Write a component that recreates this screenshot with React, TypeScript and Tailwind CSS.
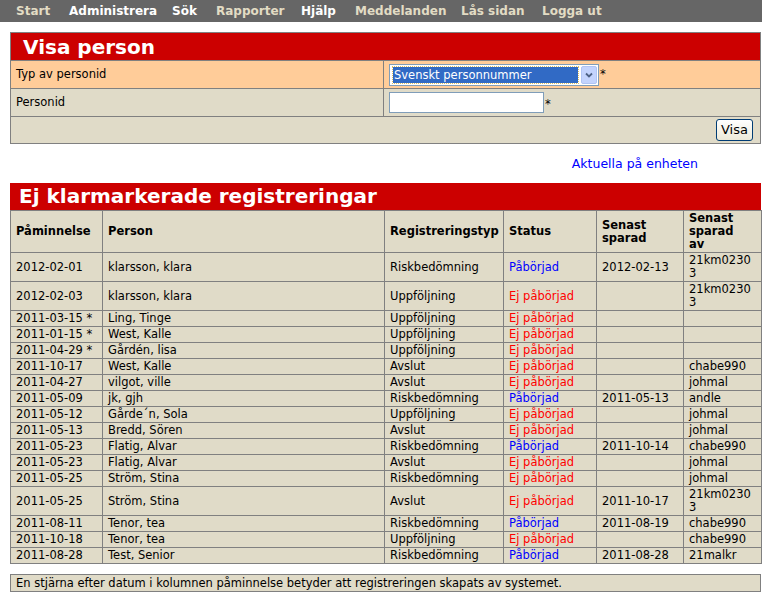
import React from "react";

const nav: { t: string; w: string; c: string }[] = [
  { t: "Start", w: "w-[53px]", c: "text-[#e2dcc4]" },
  { t: "Administrera", w: "w-[103px]", c: "text-white" },
  { t: "Sök", w: "w-[44px]", c: "text-white" },
  { t: "Rapporter", w: "w-[85px]", c: "text-[#e2dcc4]" },
  { t: "Hjälp", w: "w-[54px]", c: "text-white" },
  { t: "Meddelanden", w: "w-[106px]", c: "text-[#e2dcc4]" },
  { t: "Lås sidan", w: "w-[81px]", c: "text-[#e2dcc4]" },
  { t: "Logga ut", w: "w-[90px]", c: "text-[#e2dcc4]" },
];

type Row = { d: string; p: string; r: string; s: "P" | "E"; sp: string; av: string };

const rows: Row[] = [
  { d: "2012-02-01", p: "klarsson, klara", r: "Riskbedömning", s: "P", sp: "2012-02-13", av: "21km02303" },
  { d: "2012-02-03", p: "klarsson, klara", r: "Uppföljning", s: "E", sp: "", av: "21km02303" },
  { d: "2011-03-15 *", p: "Ling, Tinge", r: "Uppföljning", s: "E", sp: "", av: "" },
  { d: "2011-01-15 *", p: "West, Kalle", r: "Uppföljning", s: "E", sp: "", av: "" },
  { d: "2011-04-29 *", p: "Gårdén, lisa", r: "Uppföljning", s: "E", sp: "", av: "" },
  { d: "2011-10-17", p: "West, Kalle", r: "Avslut", s: "E", sp: "", av: "chabe990" },
  { d: "2011-04-27", p: "vilgot, ville", r: "Avslut", s: "E", sp: "", av: "johmal" },
  { d: "2011-05-09", p: "jk, gjh", r: "Riskbedömning", s: "P", sp: "2011-05-13", av: "andle" },
  { d: "2011-05-12", p: "Gårde´n, Sola", r: "Uppföljning", s: "E", sp: "", av: "johmal" },
  { d: "2011-05-13", p: "Bredd, Sören", r: "Avslut", s: "E", sp: "", av: "johmal" },
  { d: "2011-05-23", p: "Flatig, Alvar", r: "Riskbedömning", s: "P", sp: "2011-10-14", av: "chabe990" },
  { d: "2011-05-23", p: "Flatig, Alvar", r: "Avslut", s: "E", sp: "", av: "johmal" },
  { d: "2011-05-25", p: "Ström, Stina", r: "Riskbedömning", s: "E", sp: "", av: "johmal" },
  { d: "2011-05-25", p: "Ström, Stina", r: "Avslut", s: "E", sp: "2011-10-17", av: "21km02303" },
  { d: "2011-08-11", p: "Tenor, tea", r: "Riskbedömning", s: "P", sp: "2011-08-19", av: "chabe990" },
  { d: "2011-10-18", p: "Tenor, tea", r: "Uppföljning", s: "E", sp: "", av: "chabe990" },
  { d: "2011-08-28", p: "Test, Senior", r: "Riskbedömning", s: "P", sp: "2011-08-28", av: "21malkr" },
];

const cell = "border border-[#808080] pl-[5px] pr-[4px] py-[1px] align-middle";

export default function App() {
  return (
    <div className="min-h-[613px] bg-white text-black text-[11.5px] leading-[13px] font-['DejaVu_Sans',sans-serif]">
      <div className="h-[22px] bg-[#666666] flex items-center pl-[16px]">
        {nav.map((n) => (
          <span key={n.t} className={`${n.w} ${n.c} shrink-0 font-bold text-[12px] leading-[22px] whitespace-nowrap`}>
            {n.t}
          </span>
        ))}
      </div>

      <div className="ml-[10px] w-[751px] mt-[10px]">
        {/* Visa person */}
        <div className="border border-[#808080] bg-[#e0dbc8]">
          <div className="h-[28px] bg-[#cc0000] border-b border-[#808080] pl-[12px] pt-[1px] text-white font-bold text-[20px] leading-[27px]">
            Visa person
          </div>
          <div className="flex h-[28px] bg-[#ffcc99] border-b border-[#808080]">
            <div className="w-[373px] border-r border-[#808080] pl-[5px] flex items-center">Typ av personid</div>
            <div className="flex items-center pl-[5px]">
              <div className="w-[210px] h-[22px] border border-[#7f9db9] bg-white flex p-[1px]">
                <div className="w-[186px] ml-[2px] my-[1px] bg-[#316ac5] outline outline-1 outline-dotted outline-[#e0c060] text-white text-[11.5px] leading-[17px] pl-[1px] whitespace-nowrap">
                  Svenskt personnummer
                </div>
                <div className="ml-[3px] w-[16px] h-[18px] bg-[#c3d3fd] border border-[#b0c4f4] rounded-[2px] flex items-center justify-center">
                  <svg width="8" height="6" viewBox="0 0 8 6">
                    <path d="M1 1.5 L4 4.5 L7 1.5" fill="none" stroke="#4d6185" strokeWidth="1.8" />
                  </svg>
                </div>
              </div>
              <span className="ml-[1px]">*</span>
            </div>
          </div>
          <div className="flex h-[28px] border-b border-[#808080]">
            <div className="w-[373px] border-r border-[#808080] pl-[5px] flex items-center">Personid</div>
            <div className="flex items-center pl-[5px]">
              <div className="w-[155px] h-[21px] border border-[#7f9db9] bg-white" />
              <span className="ml-[1px] mt-[3px]">*</span>
            </div>
          </div>
          <div className="flex h-[26px] items-center justify-end pr-[7px]">
            <button className="w-[37px] h-[22px] border border-[#003c74] rounded-[3px] bg-gradient-to-b from-white to-[#ece9d8] text-[13px] leading-[20px] text-black">
              Visa
            </button>
          </div>
        </div>

        <div className="flex justify-end pr-[63px] mt-[13px] mb-[12px]">
          <span className="text-[#0000ff] text-[12.5px] leading-[14px]">Aktuella på enheten</span>
        </div>

        {/* Ej klarmarkerade */}
        <div className="h-[27px] bg-[#cc0000] pl-[9px] text-white font-bold text-[20px] leading-[27px]">
          Ej klarmarkerade registreringar
        </div>
        <table className="w-[751px] table-fixed border-collapse bg-[#e0dbc8]">
          <colgroup>
            <col className="w-[92px]" />
            <col className="w-[282px]" />
            <col className="w-[119px]" />
            <col className="w-[93px]" />
            <col className="w-[87px]" />
            <col className="w-[78px]" />
          </colgroup>
          <thead>
            <tr className="font-bold text-left">
              <th className={`${cell} whitespace-nowrap`}>Påminnelse</th>
              <th className={cell}>Person</th>
              <th className={`${cell} whitespace-nowrap`}>Registreringstyp</th>
              <th className={cell}>Status</th>
              <th className={cell}>Senast sparad</th>
              <th className={`${cell} pr-[9px]`}>Senast sparad av</th>
            </tr>
          </thead>
          <tbody>
            {rows.map((r, i) => (
              <tr key={i}>
                <td className={`${cell} whitespace-nowrap`}>{r.d}</td>
                <td className={cell}>{r.p}</td>
                <td className={cell}>{r.r}</td>
                <td className={`${cell} whitespace-nowrap ${r.s === "P" ? "text-[#0000ff]" : "text-[#ff0000]"}`}>
                  {r.s === "P" ? "Påbörjad" : "Ej påbörjad"}
                </td>
                <td className={cell}>{r.sp}</td>
                <td className={`${cell} pr-[9px] break-all`}>{r.av}</td>
              </tr>
            ))}
          </tbody>
        </table>

        <div className="mt-[10px] h-[18px] border border-[#808080] bg-[#e0dbc8] pl-[5px] leading-[16px]">
          En stjärna efter datum i kolumnen påminnelse betyder att registreringen skapats av systemet.
        </div>
      </div>
    </div>
  );
}
